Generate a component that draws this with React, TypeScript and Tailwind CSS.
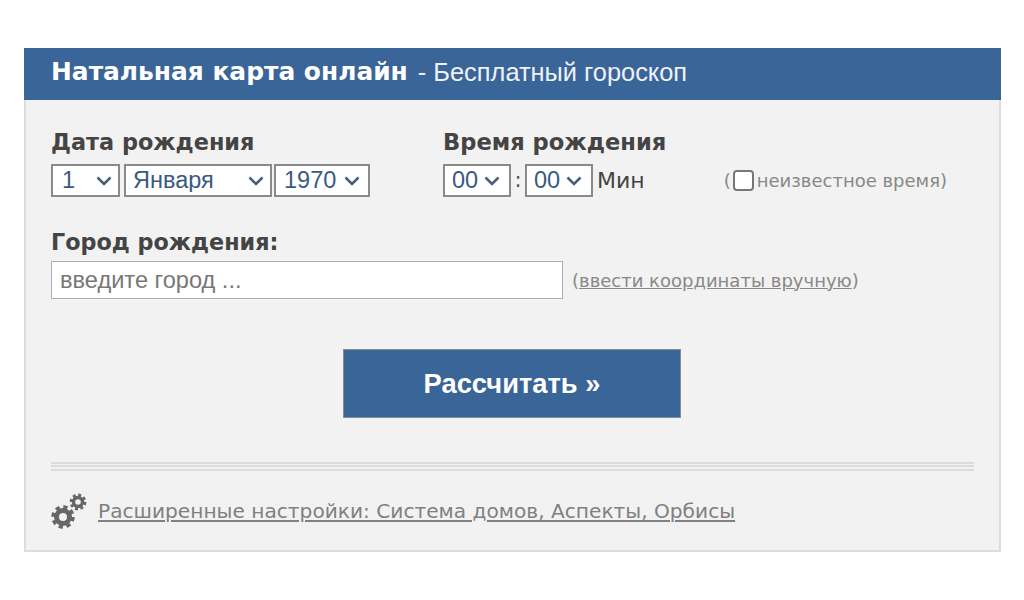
const verdana = { fontFamily: '"DejaVu Sans", Verdana, sans-serif' };

function Select({
  value,
  width,
  chevronRight = 'right-[6px]',
  textLeft = 'pl-[8px]',
}: {
  value: string;
  width: string;
  chevronRight?: string;
  textLeft?: string;
}) {
  return (
    <div className={`relative h-[33px] ${width} border-2 border-[#8a8a8a] bg-white`}>
      <select
        defaultValue={value}
        className={`h-full w-full appearance-none bg-transparent ${textLeft} font-['Liberation_Sans',Arial,sans-serif] text-[23.5px] leading-none text-[#3a5a80] outline-none`}
      >
        <option>{value}</option>
      </select>
      <svg
        viewBox="0 0 16 10"
        className={`pointer-events-none absolute top-[10px] ${chevronRight} h-[10px] w-[16px]`}
        fill="none"
        stroke="#4a5f78"
        strokeWidth="2.6"
      >
        <path d="M1.5 1.5 8 8l6.5-6.5" />
      </svg>
    </div>
  );
}

function Gears() {
  return (
    <svg viewBox="0 0 36 36" className="h-[36px] w-[36px]" fill="none" stroke="#666666">
      <circle cx="12" cy="24" r="6.5" strokeWidth="5" />
      <circle cx="12" cy="24" r="10" strokeWidth="3.5" strokeDasharray="4.2 3.65" />
      <circle cx="27" cy="9" r="4.5" strokeWidth="3.4" />
      <circle cx="27" cy="9" r="7" strokeWidth="2.8" strokeDasharray="2.9 2.6" />
    </svg>
  );
}

export default function App() {
  return (
    <div className="h-[600px] w-[1024px] bg-white px-[24px] pt-[48px]" style={verdana}>
      <div className="w-[977px]">
        {/* Title bar */}
        <div className="flex h-[52px] items-center bg-[#3a6598] pb-[4px] pl-[27px] text-white">
          <span className="text-[24.9px] font-bold">Натальная карта онлайн</span>
          <span className="ml-[10px] font-['Liberation_Sans',Arial,sans-serif] text-[25.4px] text-[#eef2f6]">- Бесплатный гороскоп</span>
        </div>

        <div className="h-[452px] border-x-2 border-b-2 border-[#dddddd] bg-[#f2f2f2] px-[25px] pt-[28px]">
          <div className="flex">
            <div className="w-[392px]">
              <div className="text-[22.4px] leading-[28px] font-bold text-[#444444]">Дата рождения</div>
              <div className="mt-[8px] flex">
                <Select value="1" width="w-[69px]" textLeft="pl-[9px]" />
                <div className="ml-[4px]">
                  <Select value="Января" width="w-[148px]" textLeft="pl-[7px]" />
                </div>
                <div className="ml-[2px]">
                  <Select value="1970" width="w-[96px]" chevronRight="right-[8px]" />
                </div>
              </div>
            </div>
            <div>
              <div className="text-[22.6px] leading-[28px] font-bold text-[#444444]">Время рождения</div>
              <div className="mt-[8px] flex items-center leading-none">
                <Select value="00" width="w-[68px]" chevronRight="right-[9px]" textLeft="pl-[7px]" />
                <span className="w-[14px] text-center text-[21px] text-[#555555]">:</span>
                <Select value="00" width="w-[68px]" chevronRight="right-[9px]" textLeft="pl-[7px]" />
                <span className="ml-[4px] text-[22px] text-[#444444]">Мин</span>
                <span className="ml-[79px] flex items-center text-[18px] text-[#888888]">
                  (<span className="mx-[2px] h-[21px] w-[21px] rounded-[4px] border-2 border-[#777777] bg-white" />
                  <span className="ml-[1px]">неизвестное время)</span>
                </span>
              </div>
            </div>
          </div>

          <div className="mt-[31px] text-[22.3px] leading-[28px] font-bold text-[#444444]">Город рождения:</div>
          <div className="mt-[5px] flex items-center">
            <input
              readOnly
              placeholder="введите город ..."
              className="h-[38px] w-[512px] border border-[#aab0b6] bg-white pl-[8px] font-['Liberation_Sans',Arial,sans-serif] text-[23.6px] text-[#555555] outline-none placeholder:text-[#777777]"
            />
            <span className="ml-[9px] text-[18px] text-[#888888]">
              (<span className="underline">ввести координаты вручную</span>)
            </span>
          </div>

          <div className="mt-[50px] flex justify-center pr-[1px]">
            <button className="h-[69px] w-[338px] border border-[#868e96] bg-[#3a6598] pt-[2px] font-['Liberation_Sans',Arial,sans-serif] text-[27.3px] font-bold text-white">
              Рассчитать »
            </button>
          </div>

          <div className="mt-[44px] h-[9px] border-y-2 border-[#dcdcdc]" />
          <div className="h-0 -translate-y-[6px] border-t-2 border-[#dcdcdc]" />

          <div className="mt-[20px] flex items-center">
            <Gears />
            <span className="ml-[11px] text-[20.15px] text-[#808080] underline">Расширенные настройки: Система домов, Аспекты, Орбисы</span>
          </div>
        </div>
      </div>
    </div>
  );
}
